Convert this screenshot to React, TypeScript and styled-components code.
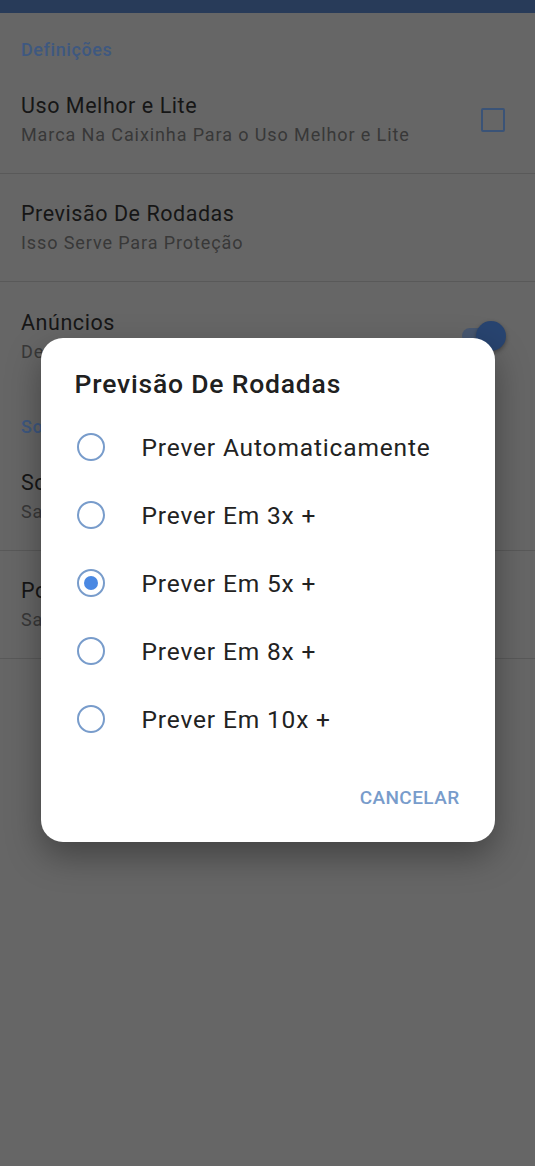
import React, { useState } from "react";
import styled, { createGlobalStyle } from "styled-components";

const GlobalStyle = createGlobalStyle`
  html, body {
    margin: 0;
    padding: 0;
    background: #666666;
    font-family: Roboto, "Noto Sans", "Liberation Sans", sans-serif;
  }
`;

const Page = styled.div`
  position: relative;
  min-height: 1166px;
  background: #666666;
  overflow: hidden;
`;

const TopBar = styled.div`
  height: 13px;
  background: #283b59;
`;

const SectionTitle = styled.div`
  padding: 25px 21px 4px;
  font-size: 18px;
  line-height: 24px;
  font-weight: 500;
  letter-spacing: 0.6px;
  color: #3e5880;
`;

const Row = styled.div<{ $divider?: boolean }>`
  height: 108px;
  box-sizing: border-box;
  display: flex;
  align-items: center;
  padding: 0 0 0 21px;
  border-bottom: ${(p) => (p.$divider ? "1px solid #595959" : "none")};
`;

const RowText = styled.div`
  flex: 1;
  display: flex;
  flex-direction: column;
  gap: 3px;
  white-space: nowrap;
`;

const RowTitle = styled.div`
  font-size: 21.5px;
  line-height: 28px;
  letter-spacing: 0.55px;
  color: #161616;
`;

const RowSub = styled.div`
  font-size: 18px;
  line-height: 24px;
  letter-spacing: 0.9px;
  color: #383838;
`;

const CheckBox = styled.div`
  width: 20px;
  height: 20px;
  border: 2.5px solid #3a5377;
  border-radius: 2px;
  margin-right: 30px;
`;

const Switch = styled.div`
  position: relative;
  width: 38px;
  height: 16px;
  margin-right: 35px;
  border-radius: 8px;
  background: #475770;
`;

const Thumb = styled.div`
  position: absolute;
  right: -6px;
  top: -7px;
  width: 30px;
  height: 30px;
  border-radius: 50%;
  background: #284470;
  box-shadow: 0 2px 4px rgba(0, 0, 0, 0.35);
`;

const Overlay = styled.div`
  position: absolute;
  inset: 0;
  display: flex;
  justify-content: center;
  align-items: flex-start;
  padding-top: 338px;
`;

const Dialog = styled.div`
  width: 454px;
  box-sizing: border-box;
  background: #ffffff;
  border-radius: 22px;
  padding: 30px 0 0;
  box-shadow: 0 14px 34px rgba(0, 0, 0, 0.35);
`;

const DialogTitle = styled.div`
  padding: 0 34px 13px;
  font-size: 26.5px;
  line-height: 32px;
  font-weight: 500;
  letter-spacing: 0.8px;
  color: #202020;
`;

const Option = styled.label`
  height: 68px;
  display: flex;
  align-items: center;
  padding-left: 36px;
  gap: 37px;
  cursor: pointer;
  font-size: 24.5px;
  letter-spacing: 0.85px;
  color: #222222;
`;

const Radio = styled.span<{ $checked: boolean }>`
  width: 28px;
  height: 28px;
  box-sizing: border-box;
  border-radius: 50%;
  border: 2.5px solid #789ccb;
  display: flex;
  align-items: center;
  justify-content: center;

  &::after {
    content: "";
    width: 14px;
    height: 14px;
    border-radius: 50%;
    background: #4a88e2;
    display: ${(p) => (p.$checked ? "block" : "none")};
  }
`;

const Actions = styled.div`
  display: flex;
  justify-content: flex-end;
  padding: 30px 35px 29px;
`;

const TextButton = styled.button`
  border: none;
  background: none;
  padding: 0;
  font-family: inherit;
  font-size: 19px;
  line-height: 30px;
  font-weight: 500;
  letter-spacing: 0.4px;
  color: #789ccb;
  cursor: pointer;
`;

const options = [
  "Prever Automaticamente",
  "Prever Em 3x +",
  "Prever Em 5x +",
  "Prever Em 8x +",
  "Prever Em 10x +",
];

export default function App() {
  const [selected, setSelected] = useState(2);

  return (
    <Page>
      <GlobalStyle />
      <TopBar />
      <SectionTitle>Definições</SectionTitle>
      <Row $divider>
        <RowText>
          <RowTitle>Uso Melhor e Lite</RowTitle>
          <RowSub>Marca Na Caixinha Para o Uso Melhor e Lite</RowSub>
        </RowText>
        <CheckBox />
      </Row>
      <Row $divider>
        <RowText>
          <RowTitle>Previsão De Rodadas</RowTitle>
          <RowSub>Isso Serve Para Proteção</RowSub>
        </RowText>
      </Row>
      <Row>
        <RowText>
          <RowTitle>Anúncios</RowTitle>
          <RowSub>Desativar Os Anúncios</RowSub>
        </RowText>
        <Switch>
          <Thumb />
        </Switch>
      </Row>
      <SectionTitle>Sobre</SectionTitle>
      <Row $divider>
        <RowText>
          <RowTitle>Sobre o Aplicativo</RowTitle>
          <RowSub>Saiba Mais Sobre o Aplicativo</RowSub>
        </RowText>
      </Row>
      <Row $divider>
        <RowText>
          <RowTitle>Política De Privacidade</RowTitle>
          <RowSub>Saiba Mais Sobre a Privacidade</RowSub>
        </RowText>
      </Row>

      <Overlay>
        <Dialog>
          <DialogTitle>Previsão De Rodadas</DialogTitle>
          {options.map((o, i) => (
            <Option key={o} onClick={() => setSelected(i)}>
              <Radio $checked={selected === i} />
              {o}
            </Option>
          ))}
          <Actions>
            <TextButton>CANCELAR</TextButton>
          </Actions>
        </Dialog>
      </Overlay>
    </Page>
  );
}
